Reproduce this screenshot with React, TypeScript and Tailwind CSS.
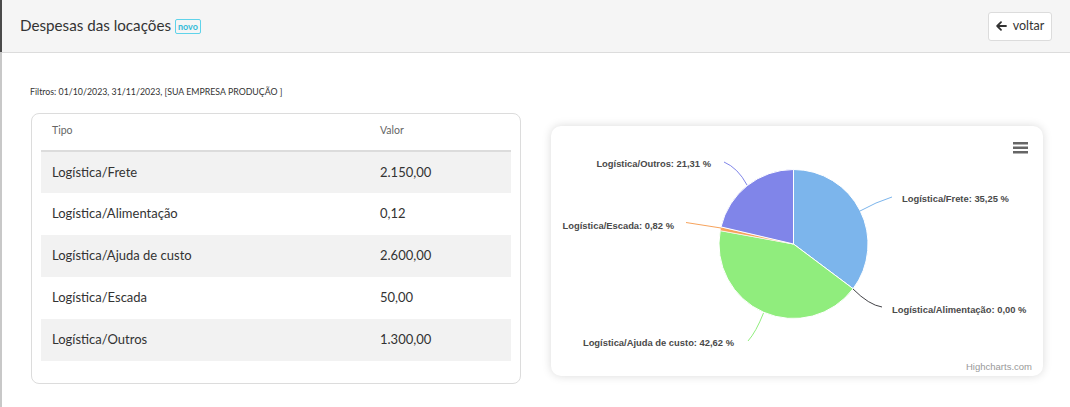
import React from "react";

const rows = [
  { tipo: "Logística/Frete", valor: "2.150,00" },
  { tipo: "Logística/Alimentação", valor: "0,12" },
  { tipo: "Logística/Ajuda de custo", valor: "2.600,00" },
  { tipo: "Logística/Escada", valor: "50,00" },
  { tipo: "Logística/Outros", valor: "1.300,00" },
];

const PieChart: React.FC = () => {
  const lbl = { fontFamily: "'Liberation Sans', Arial, sans-serif", fontSize: 9.4, fontWeight: 700, fill: "#4a4a4a" };
  return (
    <svg width="492" height="250" viewBox="0 0 492 250">
      {/* slices */}
      <path d="M242.5 118 L242.5 43.5 A74.5 74.5 0 0 1 302.1 162.7 Z" fill="#7cb5ec" stroke="#fff" strokeWidth="1" />
      <path d="M242.5 118 L302.1 162.7 A74.5 74.5 0 0 1 169.2 104.6 Z" fill="#90ed7d" stroke="#fff" strokeWidth="1" />
      <path d="M242.5 118 L169.2 104.6 A74.5 74.5 0 0 1 170.0 100.9 Z" fill="#f7a35c" stroke="#fff" strokeWidth="0.5" />
      <path d="M242.5 118 L170.0 100.9 A74.5 74.5 0 0 1 242.5 43.5 Z" fill="#8085e9" stroke="#fff" strokeWidth="1" />

      {/* connectors */}
      <path d="M309 85 Q 325 76 341 71" fill="none" stroke="#7cb5ec" strokeWidth="1" />
      <path d="M302 163 Q 318 179 331 181" fill="none" stroke="#434348" strokeWidth="1" />
      <path d="M212.5 187 Q 205 206 197 215" fill="none" stroke="#90ed7d" strokeWidth="1" />
      <path d="M170 102 L 135 96.5" fill="none" stroke="#f7a35c" strokeWidth="1" />
      <path d="M196 59 Q 187 42 173 36" fill="none" stroke="#8085e9" strokeWidth="1" />

      {/* labels */}
      <text x="351" y="75.5" style={lbl}>Logística/Frete: 35,25 %</text>
      <text x="341" y="186.5" style={lbl}>Logística/Alimentação: 0,00 %</text>
      <text x="183" y="219.5" textAnchor="end" style={lbl}>Logística/Ajuda de custo: 42,62 %</text>
      <text x="123" y="102.5" textAnchor="end" style={lbl}>Logística/Escada: 0,82 %</text>
      <text x="160" y="40.5" textAnchor="end" style={lbl}>Logística/Outros: 21,31 %</text>

      {/* menu */}
      <rect x="462" y="16" width="15" height="2.5" fill="#666" />
      <rect x="462" y="20.5" width="15" height="2.5" fill="#666" />
      <rect x="462" y="25" width="15" height="2.5" fill="#666" />

      <text
        x="481"
        y="244"
        textAnchor="end"
        style={{ fontFamily: "'Liberation Sans', Arial, sans-serif", fontSize: 9.5, fill: "#999" }}
      >
        Highcharts.com
      </text>
    </svg>
  );
};

export default function App() {
  return (
    <div className="w-[1070px] h-[407px] flex bg-white overflow-hidden font-['Lato','Open_Sans',sans-serif] text-[#333]">
      <div className="w-[2px] flex flex-col shrink-0">
        <div className="h-[52px] bg-[#4a4a4a]" />
        <div className="flex-1 bg-[#c8c8c8]" />
      </div>

      <div className="flex-1 flex flex-col">
        <div className="h-[53px] bg-[#f5f5f5] border-b border-[#dcdcdc] flex items-center justify-between pl-[18px] pr-[18px]">
          <div className="flex items-center gap-[4px]">
            <h1 className="text-[15.2px] leading-none text-[#333]">Despesas das locações</h1>
            <span className="border border-[#5fd3ea] rounded-[2px] text-[#36bcd9] text-[9px] font-bold leading-none px-[2px] py-[2px] mt-[1px]">
              novo
            </span>
          </div>
          <button className="w-[64px] h-[29px] bg-white border border-[#dcdcdc] rounded-[3px] flex items-center justify-center gap-[6px] text-[12.5px] text-[#333]">
            <svg width="11" height="10" viewBox="0 0 11 10" fill="none" stroke="#333" strokeWidth="1.8" strokeLinecap="round" strokeLinejoin="round">
              <path d="M10 5 H1.5 M5 1.2 L1.2 5 L5 8.8" />
            </svg>
            voltar
          </button>
        </div>

        <div className="pt-[33px] pl-[28px]">
          <p className="text-[8.8px] leading-[12px] text-[#333]">
            Filtros: 01/10/2023, 31/11/2023, [SUA EMPRESA PRODUÇÃO ]
          </p>

          <div className="flex items-start mt-[15px] pl-[1px]">
            <div className="w-[490px] h-[271px] border border-[#dcdcdc] rounded-[8px] pt-[7px] px-[9px]">
              <table className="w-full border-collapse">
                <thead>
                  <tr className="border-b-2 border-[#dcdcdc]">
                    <th className="w-[328px] text-left font-normal text-[10.5px] text-[#666] pl-[11px] pt-[1px] pb-[12px] leading-[16px]">Tipo</th>
                    <th className="text-left font-normal text-[10.5px] text-[#666] pl-[11px] pt-[1px] pb-[12px] leading-[16px]">Valor</th>
                  </tr>
                </thead>
                <tbody>
                  {rows.map((r, i) => (
                    <tr key={r.tipo} className={i % 2 === 0 ? "bg-[#f2f2f2] h-[42px]" : "bg-white h-[42px]"}>
                      <td className="pl-[11px] text-[13px]">{r.tipo}</td>
                      <td className="pl-[11px] text-[13px]">{r.valor}</td>
                    </tr>
                  ))}
                </tbody>
              </table>
            </div>

            <div className="ml-[30px] mt-[13px] w-[492px] h-[250px] bg-white rounded-[10px] shadow-[0_0_10px_rgba(0,0,0,0.15)] overflow-hidden">
              <PieChart />
            </div>
          </div>
        </div>
      </div>
    </div>
  );
}
